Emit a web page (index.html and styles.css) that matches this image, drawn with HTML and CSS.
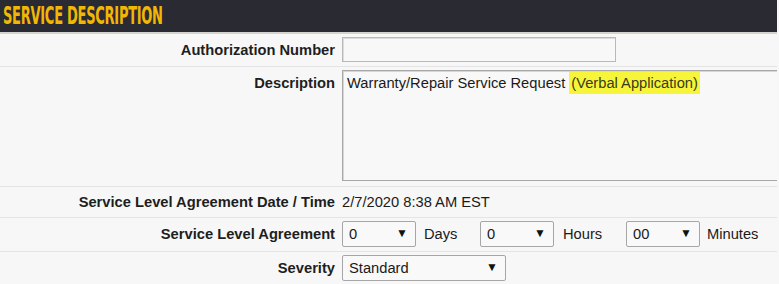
FILE: index.html
```html
<!DOCTYPE html>
<html lang="en">
<head>
    <meta charset="UTF-8">
    <meta name="viewport" content="width=device-width, initial-scale=1.0">
    <title>Service Description</title>
    <link rel="stylesheet" href="styles.css">
</head>
<body>
    <div class="panel">
        <div class="panel-header">
            <h2>SERVICE DESCRIPTION</h2>
        </div>
        <div class="form-row">
            <label class="form-label" for="auth-number">Authorization Number</label>
            <div class="form-value">
                <input type="text" id="auth-number" class="text-input">
            </div>
        </div>
        <div class="form-row row-top">
            <label class="form-label">Description</label>
            <div class="form-value">
                <div class="text-area">Warranty/Repair Service Request <mark>(Verbal Application)</mark></div>
            </div>
        </div>
        <div class="form-row row-text">
            <span class="form-label">Service Level Agreement Date / Time</span>
            <div class="form-value">2/7/2020 8:38 AM EST</div>
        </div>
        <div class="form-row">
            <span class="form-label">Service Level Agreement</span>
            <div class="form-value">
                <span class="select-wrap sla-select"><select><option>0</option></select></span>
                <span class="unit unit-days">Days</span>
                <span class="select-wrap sla-select"><select><option>0</option></select></span>
                <span class="unit unit-hours">Hours</span>
                <span class="select-wrap sla-select"><select><option>00</option></select></span>
                <span class="unit unit-minutes">Minutes</span>
            </div>
        </div>
        <div class="form-row">
            <label class="form-label">Severity</label>
            <div class="form-value">
                <span class="select-wrap severity-select"><select><option>Standard</option></select></span>
            </div>
        </div>
    </div>
</body>
</html>
```

FILE: styles.css
```css
* {
    margin: 0;
    padding: 0;
    box-sizing: border-box;
}

body {
    background-color: #f7f7f7;
    font-family: "Liberation Sans", Arial, sans-serif;
    font-size: 14.7px;
    color: #1a1a1a;
    overflow: hidden;
}

.panel {
    width: 777px;
    overflow: hidden;
}

.panel-header {
    height: 34px;
    background: #2a2a33;
    border-bottom: 2px solid #d4d4ce;
    padding-left: 3px;
}

.panel-header h2 {
    font-family: "Liberation Sans Narrow", "DejaVu Sans Condensed", sans-serif;
    font-weight: bold;
    font-size: 25px;
    line-height: 32px;
    color: #f2b705;
    letter-spacing: -0.5px;
    transform: scaleX(0.58);
    transform-origin: left center;
    white-space: nowrap;
}

.form-row {
    display: flex;
    align-items: center;
    border-bottom: 1px solid #e4e4e4;
    padding: 3px 0 4px;
}

.form-label {
    width: 335px;
    flex-shrink: 0;
    text-align: right;
    font-weight: bold;
    color: #1e1e1e;
}

.form-value {
    display: flex;
    align-items: center;
    padding-left: 7px;
    flex: 1;
    min-width: 0;
}

.row-top {
    align-items: flex-start;
    padding-bottom: 5px;
}

.row-top .form-label {
    padding-top: 5px;
}

.row-text {
    height: 31px;
    padding: 0;
}

.text-input {
    width: 274px;
    height: 25px;
    border: 1px solid #b9b9b9;
    box-shadow: inset 1px 1px 0 #dcdcdc;
    background: #f8f8f8;
    outline: none;
}

.text-area {
    width: 460px;
    height: 111px;
    flex-shrink: 0;
    border: 1px solid #a8a8a8;
    border-right: none;
    box-shadow: inset 1px 1px 0 #d6d6d6;
    background: #f8f8f8;
    padding: 2px 4px;
    line-height: 20px;
}

.text-area mark {
    background: #f6f53a;
    color: #3a3a1a;
    padding: 3px 2px 3px;
}

.select-wrap {
    position: relative;
    display: inline-block;
}

.select-wrap::after {
    content: "\25BC";
    position: absolute;
    right: 8px;
    top: 5px;
    font-size: 12px;
    color: #111;
    pointer-events: none;
}

.select-wrap select {
    display: block;
    appearance: none;
    -webkit-appearance: none;
    height: 26px;
    border: 1px solid #a6a6a6;
    border-radius: 2px;
    background: #f9f9f9;
    font-family: "Liberation Sans", Arial, sans-serif;
    font-size: 14.7px;
    color: #1a1a1a;
    padding: 0 6px;
    outline: none;
}

.sla-select select {
    width: 74px;
}

.severity-select select {
    width: 164px;
}

.unit {
    padding-left: 8px;
    color: #1a1a1a;
}

.unit-days {
    width: 64px;
}

.unit-hours {
    width: 72px;
    padding-left: 9px;
}

.unit-minutes {
    padding-left: 7px;
}
```
